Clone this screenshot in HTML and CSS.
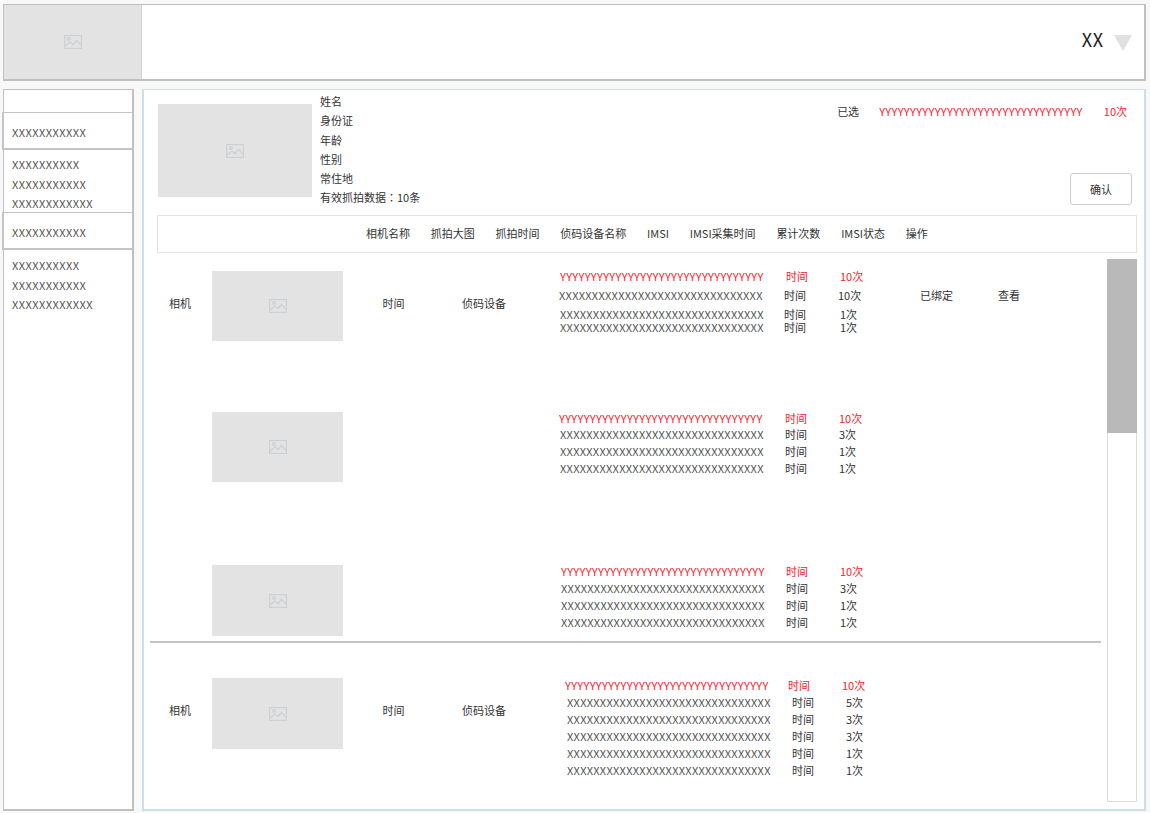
FILE: index.html
```html
<!DOCTYPE html>
<html lang="zh-CN">
<head>
  <meta charset="UTF-8">
  <title>抓拍数据</title>
  <link rel="stylesheet" href="styles.css">
</head>
<body>

	<header class="top">
		<div class="logo">
			<svg class="pic" viewBox="0 0 18 14"><rect x="0.5" y="0.5" width="17" height="13"/><circle cx="5" cy="4" r="1.3"/><path d="M1 11 L6 7 L9 9.5 L12.5 5.5 L17 10"/></svg>
		</div>
		<div class="user">
			<span>XX</span>
			<i class="arrow"></i>
		</div>
	</header>

	<div class="page">
		<!-- left tree -->
		<aside class="side">
			<div class="side-blank"></div>
			<div class="side-head">XXXXXXXXXXX</div>
			<ul class="side-list">
				<li>XXXXXXXXXX</li>
				<li>XXXXXXXXXXX</li>
				<li>XXXXXXXXXXXX</li>
			</ul>
			<div class="side-head">XXXXXXXXXXX</div>
			<ul class="side-list side-list-last">
				<li>XXXXXXXXXX</li>
				<li>XXXXXXXXXXX</li>
				<li>XXXXXXXXXXXX</li>
			</ul>
		</aside>

		<main class="main">
			<section class="person">
				<div class="pic-box person-pic">
					<svg class="pic" viewBox="0 0 18 14"><rect x="0.5" y="0.5" width="17" height="13"/><circle cx="5" cy="4" r="1.3"/><path d="M1 11 L6 7 L9 9.5 L12.5 5.5 L17 10"/></svg>
				</div>
				<ul class="info">
					<li>姓名</li>
					<li>身份证</li>
					<li>年龄</li>
					<li>性别</li>
					<li>常住地</li>
					<li>有效抓拍数据<span class="colon" lang="zh-TW">：</span>10条</li>
				</ul>
				<div class="picked">
					<div class="picked-row">
						<span class="picked-label">已选</span>
						<span class="red picked-code">YYYYYYYYYYYYYYYYYYYYYYYYYYYYYYYYY</span>
						<span class="red picked-num">10次</span>
					</div>
					<button class="btn" type="button">确认</button>
				</div>
			</section>

			<div class="thead">
				<span>相机名称</span>
				<span>抓拍大图</span>
				<span>抓拍时间</span>
				<span>侦码设备名称</span>
				<span>IMSI</span>
				<span>IMSI采集时间</span>
				<span>累计次数</span>
				<span>IMSI状态</span>
				<span>操作</span>
			</div>

			<div class="body">
				<div class="rows">
					<div class="group group-a">
						<div class="shot shot-1">
							<div class="cell-name">相机</div>
							<div class="pic-box shot-pic">
								<svg class="pic" viewBox="0 0 18 14"><rect x="0.5" y="0.5" width="17" height="13"/><circle cx="5" cy="4" r="1.3"/><path d="M1 11 L6 7 L9 9.5 L12.5 5.5 L17 10"/></svg>
							</div>
							<div class="cell-time">时间</div>
							<div class="cell-dev">侦码设备</div>
							<div class="lines lines-1">
								<div class="line red"><span>YYYYYYYYYYYYYYYYYYYYYYYYYYYYYYYYY</span><span>时间</span><span>10次</span></div>
								<div class="line line-b"><span>XXXXXXXXXXXXXXXXXXXXXXXXXXXXXXX</span><span>时间</span><span>10次</span><span>已绑定</span><span>查看</span></div>
								<div class="line line-c"><span>XXXXXXXXXXXXXXXXXXXXXXXXXXXXXXX</span><span>时间</span><span>1次</span></div>
								<div class="line line-d"><span>XXXXXXXXXXXXXXXXXXXXXXXXXXXXXXX</span><span>时间</span><span>1次</span></div>
							</div>
						</div>
						<div class="shot shot-2">
							<div class="cell-name"></div>
							<div class="pic-box shot-pic">
								<svg class="pic" viewBox="0 0 18 14"><rect x="0.5" y="0.5" width="17" height="13"/><circle cx="5" cy="4" r="1.3"/><path d="M1 11 L6 7 L9 9.5 L12.5 5.5 L17 10"/></svg>
							</div>
							<div class="cell-time"></div>
							<div class="cell-dev"></div>
							<div class="lines lines-2">
								<div class="line red"><span>YYYYYYYYYYYYYYYYYYYYYYYYYYYYYYYYY</span><span>时间</span><span>10次</span></div>
								<div class="line"><span>XXXXXXXXXXXXXXXXXXXXXXXXXXXXXXX</span><span>时间</span><span>3次</span></div>
								<div class="line"><span>XXXXXXXXXXXXXXXXXXXXXXXXXXXXXXX</span><span>时间</span><span>1次</span></div>
								<div class="line"><span>XXXXXXXXXXXXXXXXXXXXXXXXXXXXXXX</span><span>时间</span><span>1次</span></div>
							</div>
						</div>
						<div class="shot shot-3">
							<div class="cell-name"></div>
							<div class="pic-box shot-pic shot-pic-tall">
								<svg class="pic" viewBox="0 0 18 14"><rect x="0.5" y="0.5" width="17" height="13"/><circle cx="5" cy="4" r="1.3"/><path d="M1 11 L6 7 L9 9.5 L12.5 5.5 L17 10"/></svg>
							</div>
							<div class="cell-time"></div>
							<div class="cell-dev"></div>
							<div class="lines lines-3">
								<div class="line red"><span>YYYYYYYYYYYYYYYYYYYYYYYYYYYYYYYYY</span><span>时间</span><span>10次</span></div>
								<div class="line"><span>XXXXXXXXXXXXXXXXXXXXXXXXXXXXXXX</span><span>时间</span><span>3次</span></div>
								<div class="line"><span>XXXXXXXXXXXXXXXXXXXXXXXXXXXXXXX</span><span>时间</span><span>1次</span></div>
								<div class="line"><span>XXXXXXXXXXXXXXXXXXXXXXXXXXXXXXX</span><span>时间</span><span>1次</span></div>
							</div>
						</div>
					</div>

					<div class="group group-b">
						<div class="shot shot-4">
							<div class="cell-name">相机</div>
							<div class="pic-box shot-pic shot-pic-tall">
								<svg class="pic" viewBox="0 0 18 14"><rect x="0.5" y="0.5" width="17" height="13"/><circle cx="5" cy="4" r="1.3"/><path d="M1 11 L6 7 L9 9.5 L12.5 5.5 L17 10"/></svg>
							</div>
							<div class="cell-time">时间</div>
							<div class="cell-dev">侦码设备</div>
							<div class="lines lines-4">
								<div class="line red"><span>YYYYYYYYYYYYYYYYYYYYYYYYYYYYYYYYY</span><span>时间</span><span>10次</span></div>
								<div class="line line-in"><span>XXXXXXXXXXXXXXXXXXXXXXXXXXXXXXX</span><span>时间</span><span>5次</span></div>
								<div class="line line-in"><span>XXXXXXXXXXXXXXXXXXXXXXXXXXXXXXX</span><span>时间</span><span>3次</span></div>
								<div class="line line-in"><span>XXXXXXXXXXXXXXXXXXXXXXXXXXXXXXX</span><span>时间</span><span>3次</span></div>
								<div class="line line-in"><span>XXXXXXXXXXXXXXXXXXXXXXXXXXXXXXX</span><span>时间</span><span>1次</span></div>
								<div class="line line-in"><span>XXXXXXXXXXXXXXXXXXXXXXXXXXXXXXX</span><span>时间</span><span>1次</span></div>
							</div>
						</div>
					</div>
				</div>

				<div class="scroll"><div class="thumb"></div></div>
			</div>
		</main>
	</div>

</body>
</html>
```

FILE: styles.css
```css
*{
	box-sizing: border-box;
}
body{
	font-family: "Noto Sans CJK SC", Roboto, sans-serif;
	font-size: 11px;
	color: #333;
	background: #f8f8f8;
	margin: 0;
	height: 813px;
	overflow: hidden;
	padding: 4px 4px 2px 3px;
}
ul{
	margin: 0;
	padding: 0;
	list-style: none;
}
.red{
	color: #f5222d;
}

/* placeholders */
.pic-box{
	background: #e3e3e3;
	display: flex;
	align-items: center;
	justify-content: center;
}
.pic{
	width: 18px;
	height: 14px;
	fill: none;
	stroke: #cdd0d4;
	stroke-width: 1.3;
}

/* header */
.top{
	height: 77px;
	background: #fff;
	border: 2px solid #c0c0c0;
	border-width: 1px 2px 2px 1px;
	display: flex;
	justify-content: space-between;
	align-items: center;
}
.logo{
	width: 138px;
	height: 100%;
	background: #e3e3e3;
	border-right: 1px solid #ccd2d8;
	display: flex;
	align-items: center;
	justify-content: center;
}
.user{
	display: flex;
	align-items: center;
	gap: 10px;
	padding: 0 12.5px 6px 0;
	font-size: 18px;
	letter-spacing: .5px;
	color: #222;
}
.arrow{
	width: 0;
	height: 0;
	border-left: 9.5px solid transparent;
	border-right: 9.5px solid transparent;
	border-top: 16px solid #e0e0e0;
	margin-top: 7px;
}

/* page */
.page{
	display: flex;
	align-items: stretch;
	height: 722px;
	margin-top: 8px;
	gap: 8px;
}
.side{
	width: 131px;
	background: #fff;
	border: 2px solid #c0c0c0;
	border-width: 1px 2px 2px 1px;
}
.side-blank{
	height: 22px;
}
.side-head{
	height: 38px;
	margin-left: -2px;
	padding: 11px 0 0 8px;
	background: #fff;
	border: 2px solid #c4c4c4;
	border-width: 1px 0 2px 2px;
	color: #555;
	letter-spacing: .45px;
}
.side-list{
	padding: 5px 0 0 8px;
	height: 62px;
	color: #555;
	letter-spacing: .45px;
}
.side-list-last{
	padding-top: 6px;
}
.side-list li{
	line-height: 19.5px;
}

/* main */
.main{
	width: 1004px;
	background: #fff;
	border: 2px solid #cfdfe9;
	border-width: 1px 2px 2px 2px;
	padding: 14px 7px 0 13px;
	display: flex;
	flex-direction: column;
}
.person{
	display: flex;
	height: 111px;
}
.person-pic{
	width: 154px;
	height: 93px;
	margin-left: 1px;
	flex: none;
}
.info{
	margin: -12px 0 0 8px;
	line-height: 19.3px;
	width: 140px;
}
.colon{
	font-family: "Noto Sans CJK TC", sans-serif;
}
.picked{
	flex: 1;
	display: flex;
	flex-direction: column;
	align-items: flex-end;
	justify-content: space-between;
	padding: 0 5px 10px 0;
}
.picked-row{
	display: flex;
	margin-top: -3px;
	padding-right: 5px;
	line-height: 20px;
}
.picked-label{
	margin-right: 20px;
}
.picked-code{
	letter-spacing: .33px;
}
.picked-num{
	margin-left: 21px;
}
.btn{
	width: 62px;
	height: 32px;
	background: #fff;
	border: 1px solid #ccc;
	border-radius: 3px;
	font: inherit;
	color: #333;
}
.thead{
	height: 38px;
	border: 1px solid #e2e2e2;
	display: flex;
	align-items: center;
	gap: 20.75px;
	padding: 0 0 2px 208px;
	flex: none;
}

/* rows */
.body{
	display: flex;
	flex: 1;
	min-height: 0;
	margin-left: -7px;
	padding-top: 6px;
}
.rows{
	width: 951px;
}
.group-a{
	height: 384px;
	border-bottom: 2px solid #c4c4c4;
	padding-top: 12px;
}
.group-b{
	padding-top: 35px;
}
.shot{
	display: grid;
	grid-template-columns: 62px 131px 101px 80px 1fr;
	align-items: start;
}
.shot-2{
	margin-top: 71px;
}
.shot-3{
	margin-top: 83px;
}
.cell-name,
.cell-time,
.cell-dev{
	text-align: center;
	line-height: 20px;
	margin-top: 22px;
}
.cell-name{
	padding-right: 2px;
}
.shot-pic{
	height: 70px;
}
.shot-pic-tall{
	height: 71px;
}

/* code / time / count lines */
.lines{
	margin-left: 36px;
	margin-top: -3px;
}
.lines-2{
	margin-left: 35px;
	margin-top: -2px;
}
.lines-3{
	margin-left: 37px;
	margin-top: -2px;
}
.lines-4{
	margin-left: 41px;
	margin-top: -1px;
}
.line{
	--c1: 225px;
	--c2: 54px;
	display: grid;
	grid-template-columns: var(--c1) var(--c2) 82px 78px auto;
	height: 17px;
	line-height: 17px;
	white-space: nowrap;
}
.line > span:first-child{
	color: #555;
	letter-spacing: .27px;
}
.line.red{
	--c1: 226px;
}
.line.red > span:first-child{
	color: inherit;
	letter-spacing: .33px;
}
.lines-2 .line.red{
	height: 16px;
	line-height: 16px;
}
.lines-2 .line:not(.red){
	margin-left: 1px;
}
.lines-3 .line.red{
	--c1: 225px;
}
.lines-4 .line.red{
	--c1: 223px;
}
.line-b{
	height: 19px;
	margin: 2px 0 0 -1px;
}
.line-c{
	--c1: 224px;
	--c2: 56px;
	height: 13px;
	line-height: 13px;
	margin-top: 2px;
}
.line-d{
	--c1: 224px;
	--c2: 56px;
	height: 13px;
	line-height: 13px;
}
.line-in{
	margin-left: 2px;
}

/* scroll */
.scroll{
	width: 30px;
	margin-left: 6px;
	margin-bottom: 7px;
	border: 1px solid #dcdcdc;
	background: #fff;
}
.thumb{
	height: 174px;
	background: #b9b9b9;
	margin: -1px;
}
```
